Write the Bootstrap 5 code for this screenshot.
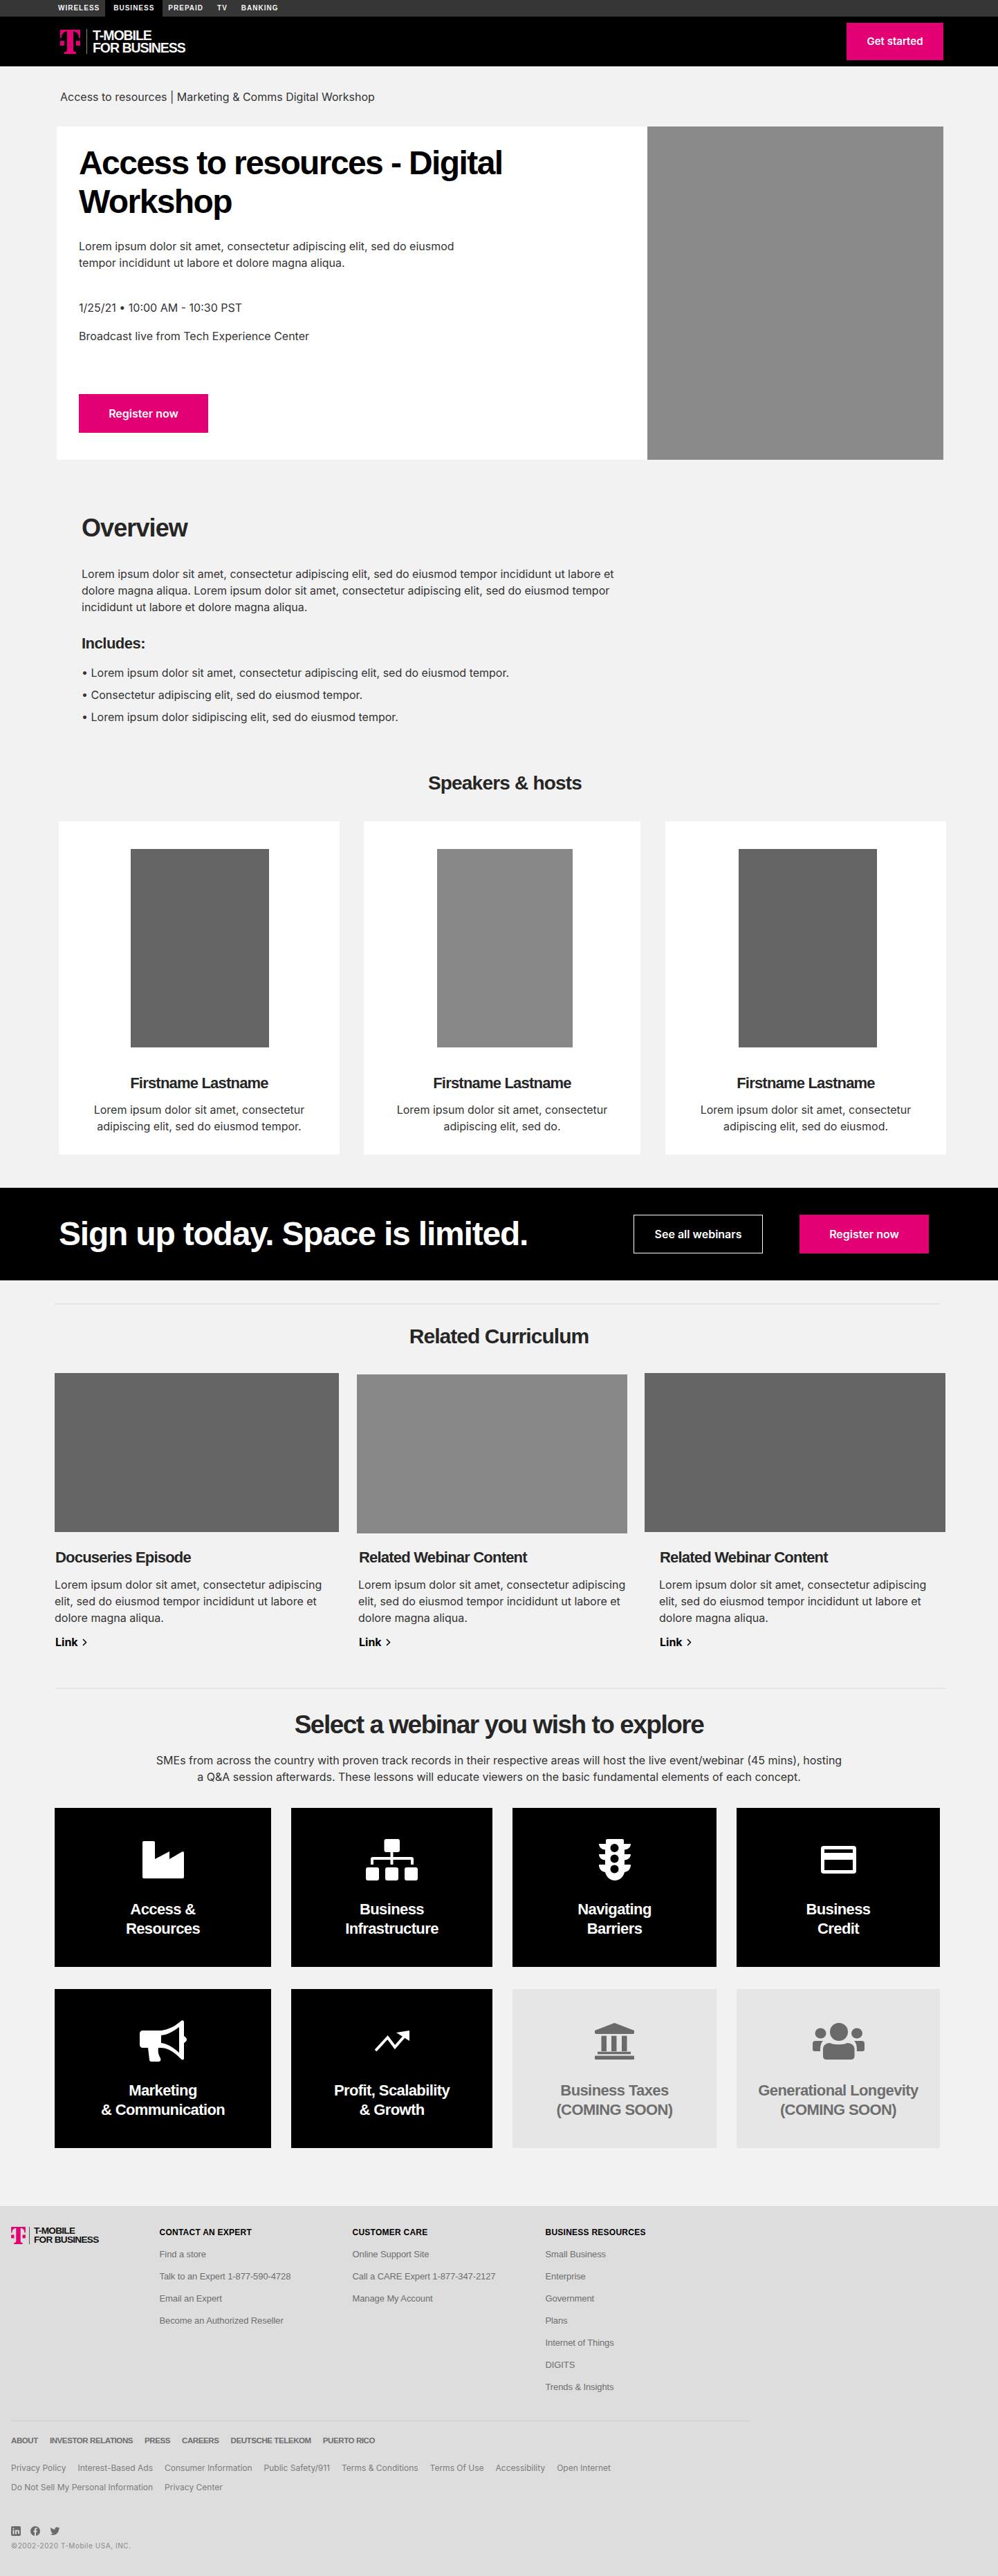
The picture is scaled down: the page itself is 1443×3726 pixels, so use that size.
<!DOCTYPE html>
<html lang="en">
<head>
  <meta charset="UTF-8">
  <meta name="viewport" content="width=device-width, initial-scale=1.0">
  <title>T-Mobile for Business - Digital Workshop</title>
  <link href="https://cdn.jsdelivr.net/npm/bootstrap@5.3.3/dist/css/bootstrap.min.css" rel="stylesheet">
  <style>
    body { background-color: #f2f2f2; color: #333; font-family: Inter, "Liberation Sans", sans-serif; font-size: 16px; line-height: 24px; }
    h1, h2, h3, h4 { font-family: "Liberation Sans", Arial, sans-serif; font-weight: 700; margin: 0; color: #262626; }
    p { margin: 0; }
    a { color: inherit; text-decoration: none; }

    .btn-tm { display: inline-flex; align-items: center; justify-content: center; width: 187px; height: 56px; padding: 0; border: 0; border-radius: 0; font-weight: 600; font-size: 16px; color: #fff; background: #e20074; }
    .btn-tm:hover { color: #fff; background: #e20074; }
    .btn-line { background: transparent; border: 1px solid #fff; }
    .btn-line:hover { background: transparent; }

    /* top bars */
    .topbar { height: 24px; background: #363636; padding-left: 72px; }
    .top-link { display: flex; align-items: center; height: 24px; padding: 0 12px; color: #f2f2f2; font-family: "Liberation Sans", sans-serif; font-weight: 700; font-size: 10px; letter-spacing: 1px; }
    .top-link + .top-link { margin-left: -4px; }
    .top-link.current { background: #000; position: relative; }
    .mainbar { height: 72px; background: #000; padding: 0 79px 0 87px; }
    .logo-word { font-family: "Liberation Sans", sans-serif; font-weight: 700; white-space: nowrap; }
    .mainbar .logo-word { color: #f5f5f5; font-size: 19.5px; line-height: 18px; letter-spacing: -1.05px; border-left: 1px solid #888; padding-left: 8px; margin-left: 9px; height: 36px; }
    .btn-start { width: 140px; height: 54px; font-size: 15px; }

    .crumb { padding: 32px 0 31px 87px; font-size: 16px; line-height: 24px; color: #333; }

    .hero { margin: 0 79px 0 82px; height: 482px; }
    .hero-text { width: 854px; background: #fff; padding: 25px 32px 0; }
    .hero-pic { background: #8a8a8a; }
    .hero h1 { font-size: 48px; line-height: 56px; letter-spacing: -1.6px; color: #000; width: 660px; }
    .hero-lead { width: 560px; margin-top: 24px; }
    .hero-date { margin-top: 41px; }
    .hero-place { margin-top: 17px; }
    .hero .btn-tm { margin-top: 72px; }

    .overview { padding: 77px 0 0 118px; }
    .overview h2 { font-size: 36px; line-height: 44px; letter-spacing: -.9px; }
    .overview-text { width: 790px; margin-top: 32px; }
    .overview h3 { font-size: 22px; line-height: 28px; letter-spacing: -.5px; margin-top: 27px; }
    .overview ul { margin: 16px 0 0; padding: 0; list-style: none; }
    .overview li { margin-bottom: 8px; }

    .speak-title { font-size: 28px; line-height: 40px; letter-spacing: -.8px; text-align: center; margin-top: 64px; padding-left: 17px; }
    .speakers { margin-top: 35px; padding-left: 85px; gap: 35px; }
    .speaker { width: 406px; height: 482px; background: #fff; padding-top: 40px; text-align: center; }
    .speaker.narrow { width: 400px; }
    .speaker.last { margin-left: 1px; }
    .speaker-pic { width: 200px; height: 287px; background: #656565; margin-left: 104px; }
    .last .speaker-pic { margin-left: 106px; }
    .narrow .speaker-pic { width: 196px; background: #888; margin-left: 106px; }
    .speaker h4 { font-size: 22px; line-height: 28px; letter-spacing: -.8px; margin-top: 38px; }
    .speaker p { margin-top: 12px; padding: 0 40px; }

    .signup { height: 134px; background: #000; margin-top: 48px; padding: 0 100px 0 85px; }
    .signup h2 { font-size: 48px; line-height: 56px; letter-spacing: -1.2px; color: #fff; }
    .signup-btns { gap: 53px; }

    .rule { border: 0; border-top: 2px solid #e6e6e6; opacity: 1; margin: 0; }
    .rule-one { margin: 33px 84px 0 79px; }
    .related-title { font-size: 30px; line-height: 40px; letter-spacing: -.95px; text-align: center; margin-top: 26px; }
    .related { margin-top: 33px; padding-left: 79px; }
    .rel-a { width: 437px; }
    .rel-b { width: 416px; }
    .rel-c { width: 435px; }
    .rel-pic { height: 230px; }
    .rel-a .rel-pic { width: 411px; background: #656565; }
    .rel-b .rel-pic { width: 391px; background: #888; margin-top: 2px; }
    .rel-c .rel-pic { width: 435px; background: #656565; }
    .rel-text { width: 400px; margin-top: 23px; }
    .rel-a .rel-text { padding-left: 1px; }
    .rel-b .rel-text { padding-left: 3px; margin-top: 21px; }
    .rel-c .rel-text { padding-left: 22px; width: 424px; }
    .rel-text h4 { font-size: 22px; line-height: 28px; letter-spacing: -.8px; }
    .rel-text p { margin-top: 13px; margin-left: -1px; }
    .rel-link { display: inline-flex; align-items: center; gap: 6px; margin-top: 11px; font-weight: 700; color: #000; }

    .rule-two { margin: 54px 76px 0 80px; }
    .select-title { font-size: 37px; line-height: 48px; letter-spacing: -1.5px; text-align: center; margin-top: 28px; }
    .select-text { width: 1000px; margin: 15px auto 0; text-align: center; }
    .tiles { display: grid; grid-template-columns: 313px 291px 295px 294px; gap: 32px 29px; margin-top: 33px; padding-left: 79px; }
    .tile { height: 230px; background: #000; color: #fff; padding-top: 45px; text-align: center; font-family: "Liberation Sans", sans-serif; font-weight: 700; font-size: 22px; line-height: 28px; letter-spacing: -.6px; }
    .tile.soon { background: #e6e6e6; color: #6e6e6e; }
    .tile-icon { height: 60px; margin-bottom: 28px; }

    .foot { background: #ddd; margin-top: 84px; padding: 30px 0 37px 16px; color: #6e6e6e; font-family: "Liberation Sans", sans-serif; font-size: 13px; line-height: 20px; }
    .foot-logo { width: 214.5px; }
    .foot-logo .logo-word { color: #111; font-size: 13.6px; line-height: 12.5px; letter-spacing: -.7px; border-left: 1px solid #555; padding-left: 6px; margin-left: 5px; height: 25px; }
    .foot-col { width: 279px; }
    .foot-col h5 { font-family: "Liberation Sans", sans-serif; font-size: 12px; line-height: 16px; font-weight: 700; letter-spacing: .25px; color: #000; margin: 0 0 14px; }
    .foot-col ul { margin: 0; padding: 0; list-style: none; }
    .foot-col li { margin-bottom: 12px; letter-spacing: -.1px; }
    .rule-foot { border-top: 1px solid #cfcfcf; width: 1067px; margin-top: 26px; }
    .foot-main { gap: 17px; margin-top: 18px; font-size: 11.5px; font-weight: 700; letter-spacing: -.4px; text-transform: uppercase; }
    .foot-legal { gap: 17px; margin-top: 20px; width: 1100px; font-family: Inter, sans-serif; font-size: 12px; color: #7c7c7c; }
    .foot-legal-two { margin-top: 8px; }
    .foot-social { gap: 14px; margin-top: 46px; height: 14px; }
    .foot-copy { margin-top: 7px; font-family: Inter, sans-serif; font-size: 10px; line-height: 14px; letter-spacing: .55px; color: #8a8a8a; }
  </style>
</head>
<body>

  <!-- Top -->
  <div class="topbar d-flex">
    <a class="top-link" href="#">WIRELESS</a>
    <a class="top-link current" href="#">BUSINESS</a>
    <a class="top-link" href="#">PREPAID</a>
    <a class="top-link" href="#">TV</a>
    <a class="top-link" href="#">BANKING</a>
  </div>
  <nav class="mainbar d-flex align-items-center justify-content-between">
    <a class="d-flex align-items-center" href="#">
      <svg width="29" height="35" viewBox="0 0 29 35" fill="#e20074"><path d="M0 0H29V12H27C27 6 24 3 19 2.5V29C19 31 20 32 22 32H23V35H6V32H7C9 32 10 31 10 29V2.5C5 3 2 6 2 12H0Z"/><rect x="0" y="16" width="6" height="7"/><rect x="23" y="16" width="6" height="7"/></svg>
      <span class="logo-word">T-MOBILE<br>FOR BUSINESS</span>
    </a>
    <a class="btn btn-tm btn-start" href="#">Get started</a>
  </nav>

  <div class="crumb">Access to resources | Marketing &amp; Comms Digital Workshop</div>

  <!-- Hero -->
  <section class="hero d-flex">
    <div class="hero-text">
      <h1>Access to resources - Digital Workshop</h1>
      <p class="hero-lead">Lorem ipsum dolor sit amet, consectetur adipiscing elit, sed do eiusmod tempor incididunt ut labore et dolore magna aliqua.</p>
      <p class="hero-date">1/25/21 • 10:00 AM - 10:30 PST</p>
      <p class="hero-place">Broadcast live from Tech Experience Center</p>
      <a class="btn btn-tm" href="#">Register now</a>
    </div>
    <div class="hero-pic flex-grow-1"></div>
  </section>

  <!-- Overview -->
  <section class="overview">
    <h2>Overview</h2>
    <p class="overview-text">Lorem ipsum dolor sit amet, consectetur adipiscing elit, sed do eiusmod tempor incididunt ut labore et dolore magna aliqua. Lorem ipsum dolor sit amet, consectetur adipiscing elit, sed do eiusmod tempor incididunt ut labore et dolore magna aliqua.</p>
    <h3>Includes:</h3>
    <ul>
      <li>• Lorem ipsum dolor sit amet, consectetur adipiscing elit, sed do eiusmod tempor.</li>
      <li>• Consectetur adipiscing elit, sed do eiusmod tempor.</li>
      <li>• Lorem ipsum dolor sidipiscing elit, sed do eiusmod tempor.</li>
    </ul>
  </section>

  <!-- Speakers -->
  <h2 class="speak-title">Speakers &amp; hosts</h2>
  <section class="speakers d-flex">
    <div class="speaker">
      <div class="speaker-pic"></div>
      <h4>Firstname Lastname</h4>
      <p>Lorem ipsum dolor sit amet, consectetur adipiscing elit, sed do eiusmod tempor.</p>
    </div>
    <div class="speaker narrow">
      <div class="speaker-pic"></div>
      <h4>Firstname Lastname</h4>
      <p>Lorem ipsum dolor sit amet, consectetur adipiscing elit, sed do.</p>
    </div>
    <div class="speaker last">
      <div class="speaker-pic"></div>
      <h4>Firstname Lastname</h4>
      <p>Lorem ipsum dolor sit amet, consectetur adipiscing elit, sed do eiusmod.</p>
    </div>
  </section>

  <!-- Sign up -->
  <section class="signup d-flex align-items-center justify-content-between">
    <h2>Sign up today. Space is limited.</h2>
    <div class="signup-btns d-flex">
      <a class="btn btn-tm btn-line" href="#">See all webinars</a>
      <a class="btn btn-tm" href="#">Register now</a>
    </div>
  </section>

  <hr class="rule rule-one">

  <!-- Related -->
  <h2 class="related-title">Related Curriculum</h2>
  <section class="related d-flex">
    <div class="rel-a">
      <div class="rel-pic"></div>
      <div class="rel-text">
        <h4>Docuseries Episode</h4>
        <p>Lorem ipsum dolor sit amet, consectetur adipiscing elit, sed do eiusmod tempor incididunt ut labore et dolore magna aliqua.</p>
        <a class="rel-link" href="#">Link <svg width="7" height="11" viewBox="0 0 7 11" fill="none" stroke="#000" stroke-width="1.5"><path d="M1 1l4.5 4.5L1 10"/></svg></a>
      </div>
    </div>
    <div class="rel-b">
      <div class="rel-pic"></div>
      <div class="rel-text">
        <h4>Related Webinar Content</h4>
        <p>Lorem ipsum dolor sit amet, consectetur adipiscing elit, sed do eiusmod tempor incididunt ut labore et dolore magna aliqua.</p>
        <a class="rel-link" href="#">Link <svg width="7" height="11" viewBox="0 0 7 11" fill="none" stroke="#000" stroke-width="1.5"><path d="M1 1l4.5 4.5L1 10"/></svg></a>
      </div>
    </div>
    <div class="rel-c">
      <div class="rel-pic"></div>
      <div class="rel-text">
        <h4>Related Webinar Content</h4>
        <p>Lorem ipsum dolor sit amet, consectetur adipiscing elit, sed do eiusmod tempor incididunt ut labore et dolore magna aliqua.</p>
        <a class="rel-link" href="#">Link <svg width="7" height="11" viewBox="0 0 7 11" fill="none" stroke="#000" stroke-width="1.5"><path d="M1 1l4.5 4.5L1 10"/></svg></a>
      </div>
    </div>
  </section>

  <hr class="rule rule-two">

  <!-- Webinars -->
  <h2 class="select-title">Select a webinar you wish to explore</h2>
  <p class="select-text">SMEs from across the country with proven track records in their respective areas will host the live event/webinar (45 mins), hosting a Q&amp;A session afterwards. These lessons will educate viewers on the basic fundamental elements of each concept.</p>

  <section class="tiles">
    <a class="tile" href="#">
      <div class="tile-icon d-flex align-items-center justify-content-center">
        <svg width="60" height="54" viewBox="0 0 60 54" fill="#fff"><path d="M2 0H16a2 2 0 0 1 2 2V26L39 15V26L58 15a2 2 0 0 1 2 2V52a2 2 0 0 1-2 2H2a2 2 0 0 1-2-2V2a2 2 0 0 1 2-2Z"/></svg>
      </div>
      Access &amp;<br>Resources
    </a>
    <a class="tile" href="#">
      <div class="tile-icon d-flex align-items-center justify-content-center">
        <svg width="75" height="60" viewBox="0 0 75 60" fill="#fff"><rect x="26.5" width="22.5" height="19" rx="3"/><rect x="0" y="41" width="19" height="19" rx="3"/><rect x="28" y="41" width="19" height="19" rx="3"/><rect x="56" y="41" width="19" height="19" rx="3"/><path d="M35.5 19h4v7H66a3 3 0 0 1 3 3v8h-4v-7H39.500v7h-4v-7H11v7H7v-8a3 3 0 0 1 3-3h25.500Z"/></svg>
      </div>
      Business<br>Infrastructure
    </a>
    <a class="tile" href="#">
      <div class="tile-icon d-flex align-items-center justify-content-center">
        <svg width="46" height="60" viewBox="0 0 46 60" fill="#fff"><path d="M10 2Q10 0 12 0H34Q36 0 36 2V7H46C46 12 42 15 37 15.500V22H46C46 27 42 30 37 30.500V37H46C46 44 42 47 37 48C35 56 29 60 23 60C17 60 11 56 9 48C4 47 0 44 0 37H9V30.500C4 30 0 27 0 22H9V15.500C4 15 0 12 0 7H10Z"/><g fill="#000"><circle cx="22.500" cy="13" r="6"/><circle cx="22.500" cy="28.500" r="6"/><circle cx="22.500" cy="43.500" r="6"/></g></svg>
      </div>
      Navigating<br>Barriers
    </a>
    <a class="tile" href="#">
      <div class="tile-icon d-flex align-items-center justify-content-center">
        <svg width="51" height="40" viewBox="0 0 51 40" fill="#fff"><rect width="51" height="40" rx="4"/><rect x="5" y="5" width="41" height="5" fill="#000"/><rect x="5" y="20" width="41" height="15" fill="#000"/></svg>
      </div>
      Business<br>Credit
    </a>
    <a class="tile" href="#">
      <div class="tile-icon d-flex align-items-center justify-content-center">
        <svg width="68" height="60" viewBox="0 0 68 60" fill="#fff"><path d="M4 15H28C40 15 52 8 60 1c2-1.500 4-.5 4 2v20c2 1 4 3 4 5s-2 4-4 5v22c0 2.500-2 3-4 1.500C52 48 42 40 30 40h-3c-1 5 0 10 3 15 1 3 0 5-3 5H17c-2 0-3-1-3-3l-2-17H4c-2 0-4-2-4-4V19c0-2 2-4 4-4Z"/><path fill="#000" d="M31 22C40 21 49 16 57 10V47C49 40 40 34 31 33Z"/></svg>
      </div>
      Marketing<br>&amp; Communication
    </a>
    <a class="tile" href="#">
      <div class="tile-icon d-flex align-items-center justify-content-center">
        <svg width="50" height="30" viewBox="0 0 50 30" fill="#fff"><path d="M1 29L18.500 10L29 24L43 8" fill="none" stroke="#fff" stroke-width="4"/><path d="M31 3L50 0V15Z"/></svg>
      </div>
      Profit, Scalability<br>&amp; Growth
    </a>
    <a class="tile soon" href="#">
      <div class="tile-icon d-flex align-items-center justify-content-center">
        <svg width="57" height="53" viewBox="0 0 57 53" fill="#6a6a6a"><path d="M28.500 0L57 11V14Q57 16 55 16H2Q0 16 0 14V11Z"/><rect x="9.500" y="18.700" width="7.500" height="22.300"/><rect x="24" y="18.700" width="7.500" height="22.300"/><rect x="39" y="18.700" width="7.500" height="22.300"/><rect x="4" y="41.700" width="48" height="3.500"/><rect y="47.500" width="57" height="5.500" rx="1"/></svg>
      </div>
      Business Taxes<br>(COMING SOON)
    </a>
    <a class="tile soon" href="#">
      <div class="tile-icon d-flex align-items-center justify-content-center">
        <svg width="75" height="53" viewBox="0 0 75 53" fill="#6a6a6a"><ellipse cx="38" cy="13" rx="13" ry="13"/><ellipse cx="11.500" cy="15" rx="8" ry="7.500"/><ellipse cx="64" cy="15" rx="8" ry="7.500"/><path d="M15 38C15 32 20 29 25 29C30 32 45 32 50 29C55 29 60.500 32 60.500 38V48Q60.500 53 55 53H20Q15 53 15 48Z"/><path d="M4 26H15C12 29 11 33 11 41H3Q0 41 0 38V30Q0 26 4 26Z"/><path d="M71 26H60C63 29 64 33 64 41H72Q75 41 75 38V30Q75 26 71 26Z"/></svg>
      </div>
      Generational Longevity<br>(COMING SOON)
    </a>
  </section>

  <!-- Footer -->
  <footer class="foot">
    <div class="d-flex">
      <div class="foot-logo">
        <a class="d-flex align-items-start" href="#">
          <svg class="flex-shrink-0" width="21" height="25" viewBox="0 0 29 35" fill="#e20074"><path d="M0 0H29V12H27C27 6 24 3 19 2.500V29C19 31 20 32 22 32H23V35H6V32H7C9 32 10 31 10 29V2.500C5 3 2 6 2 12H0Z"/><rect x="0" y="16" width="6" height="7"/><rect x="23" y="16" width="6" height="7"/></svg>
          <span class="logo-word">T-MOBILE<br>FOR BUSINESS</span>
        </a>
      </div>
      <div class="foot-col">
        <h5>CONTACT AN EXPERT</h5>
        <ul>
          <li><a href="#">Find a store</a></li>
          <li><a href="#">Talk to an Expert 1-877-590-4728</a></li>
          <li><a href="#">Email an Expert</a></li>
          <li><a href="#">Become an Authorized Reseller</a></li>
        </ul>
      </div>
      <div class="foot-col">
        <h5>CUSTOMER CARE</h5>
        <ul>
          <li><a href="#">Online Support Site</a></li>
          <li><a href="#">Call a CARE Expert 1-877-347-2127</a></li>
          <li><a href="#">Manage My Account</a></li>
        </ul>
      </div>
      <div class="foot-col">
        <h5>BUSINESS RESOURCES</h5>
        <ul>
          <li><a href="#">Small Business</a></li>
          <li><a href="#">Enterprise</a></li>
          <li><a href="#">Government</a></li>
          <li><a href="#">Plans</a></li>
          <li><a href="#">Internet of Things</a></li>
          <li><a href="#">DIGITS</a></li>
          <li><a href="#">Trends &amp; Insights</a></li>
        </ul>
      </div>
    </div>
    <hr class="rule rule-foot">
    <div class="foot-main d-flex">
      <a href="#">About</a><a href="#">Investor Relations</a><a href="#">Press</a><a href="#">Careers</a><a href="#">Deutsche Telekom</a><a href="#">Puerto Rico</a>
    </div>
    <div class="foot-legal d-flex flex-wrap">
      <a href="#">Privacy Policy</a><a href="#">Interest-Based Ads</a><a href="#">Consumer Information</a><a href="#">Public Safety/911</a><a href="#">Terms &amp; Conditions</a><a href="#">Terms Of Use</a><a href="#">Accessibility</a><a href="#">Open Internet</a>
    </div>
    <div class="foot-legal foot-legal-two d-flex flex-wrap">
      <a href="#">Do Not Sell My Personal Information</a><a href="#">Privacy Center</a>
    </div>
    <div class="foot-social d-flex">
      <svg width="14" height="14" viewBox="0 0 14 14"><rect width="14" height="14" rx="2" fill="#6a6a6a"/><g fill="#ddd"><rect x="2.500" y="5.500" width="2" height="6"/><circle cx="3.500" cy="3.500" r="1.100"/><path d="M6 5.500h2v.8c.4-.6 1-1 1.900-1 1.400 0 2.100.9 2.100 2.500v3.200h-2V8.200c0-.8-.3-1.200-.9-1.200-.7 0-1.100.5-1.100 1.200v3.300H6Z"/></g></svg>
      <svg width="14" height="14" viewBox="0 0 14 14"><circle cx="7" cy="7" r="7" fill="#6a6a6a"/><path fill="#ddd" d="M6 14V8.500H4.500V6.500H6V5c0-1.800 1-2.700 2.500-2.700.7 0 1.300.1 1.300.1v1.700H9c-.8 0-1 .5-1 1v1.400h1.700l-.3 2H8V14Z"/></svg>
      <svg width="15" height="14" viewBox="0 0 24 24" fill="#6a6a6a"><path d="M23.953 4.570a10 10 0 01-2.825.775 4.958 4.958 0 002.163-2.723c-.951.555-2.005.959-3.127 1.184a4.920 4.920 0 00-8.384 4.482C7.690 8.095 4.067 6.130 1.640 3.162a4.822 4.822 0 00-.666 2.475c0 1.710.870 3.213 2.188 4.096a4.904 4.904 0 01-2.228-.616v.060a4.923 4.923 0 003.946 4.827 4.996 4.996 0 01-2.212.085 4.936 4.936 0 004.604 3.417 9.867 9.867 0 01-6.102 2.105c-.390 0-.779-.023-1.170-.067a13.995 13.995 0 007.557 2.209c9.053 0 13.998-7.496 13.998-13.985 0-.210 0-.420-.015-.630A9.935 9.935 0 0024 4.590z"/></svg>
    </div>
    <div class="foot-copy">©2002-2020 T-Mobile USA, INC.</div>
  </footer>

  <script src="https://cdn.jsdelivr.net/npm/bootstrap@5.3.3/dist/js/bootstrap.bundle.min.js"></script>
</body>
</html>
